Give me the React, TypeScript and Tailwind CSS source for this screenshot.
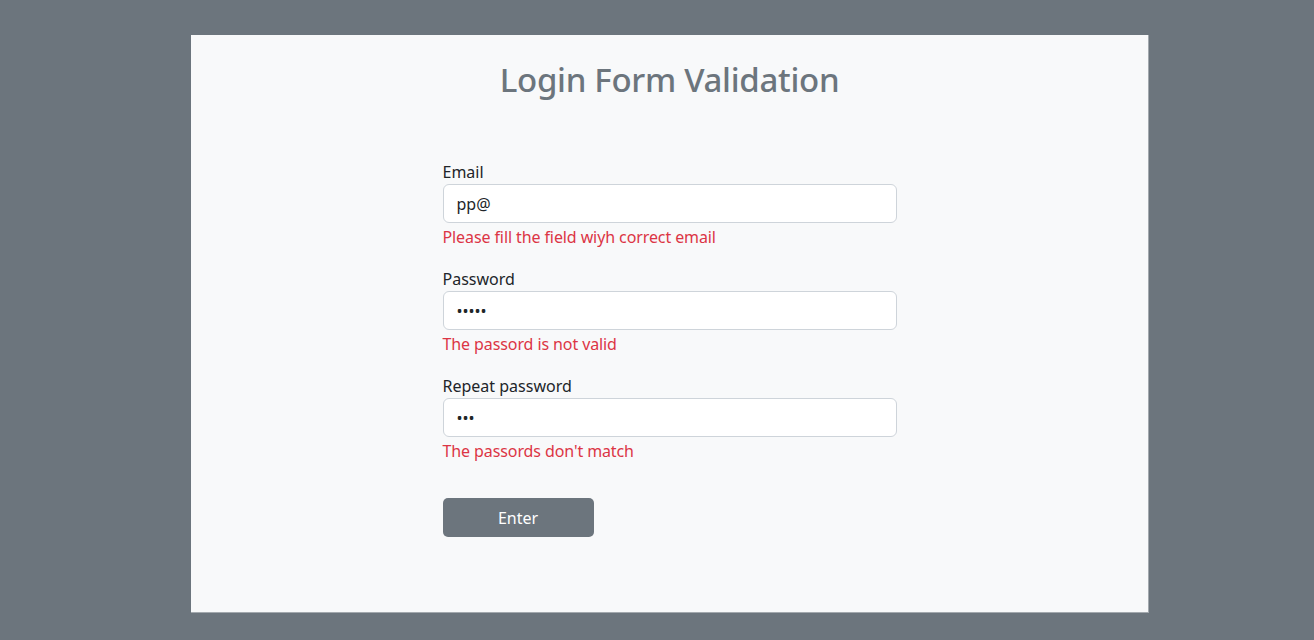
import React from "react";

const font = { fontFamily: '"Noto Sans", "Open Sans", sans-serif' };

function Field({ label, value, type, error }: { label: string; value: string; type: string; error: string }) {
  return (
    <div className="flex flex-col mb-[18px]">
      <label className="text-[16px] leading-[24px] text-[#212529]">{label}</label>
      <input
        type={type}
        defaultValue={value}
        className="h-[39px] w-full rounded-[6px] border border-[#ced4da] bg-white px-[13px] text-[16px] text-[#212529] outline-none"
        style={font}
      />
      <div className="mt-[2px] text-[16px] leading-[24px] tracking-[-0.1px] text-[#dc3545]">{error}</div>
    </div>
  );
}

export default function App() {
  return (
    <div className="min-h-[640px] w-full bg-[#6c757d] pt-[35px] pb-[27px]" style={font}>
      <div className="ml-[191px] w-[958px] h-[578px] bg-[#f8f9fa] border-r border-b border-[#a3a9ae] flex flex-col items-center">
        <h1 className="mt-[22px] text-[33px] leading-[46px] font-medium tracking-[-0.3px] text-[#6c757d]">Login Form Validation</h1>
        <form className="mt-[57px] w-[454px] flex flex-col" onSubmit={(e) => e.preventDefault()}>
          <Field label="Email" value="pp@" type="text" error="Please fill the field wiyh correct email" />
          <Field label="Password" value="11111" type="password" error="The passord is not valid" />
          <Field label="Repeat password" value="111" type="password" error="The passords don't match" />
          <button
            type="submit"
            className="mt-[17px] h-[39px] w-[151px] rounded-[5px] bg-[#6c757d] text-[16px] text-white"
            style={font}
          >
            Enter
          </button>
        </form>
      </div>
    </div>
  );
}
